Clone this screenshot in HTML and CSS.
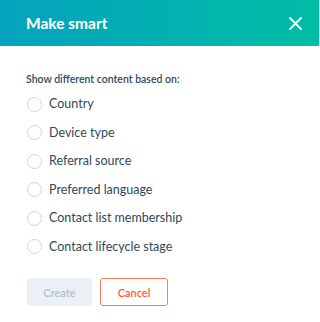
FILE: index.html
```html
<!DOCTYPE html>
<html>
<head>
<meta charset="utf-8">
<link rel="stylesheet" href="styles.css">
</head>
<body>
<div class="modal">
  <div class="header">
    <h1 class="title">Make smart</h1>
    <svg class="close" width="13" height="13" viewBox="0 0 13 13"><path d="M1 1 L12 12 M12 1 L1 12" stroke="#fff" stroke-width="1.8" stroke-linecap="round"/></svg>
  </div>
  <div class="content">
    <p class="label">Show different content based on:</p>
    <ul class="options">
      <li class="option"><span class="radio"></span><span class="opt-text">Country</span></li>
      <li class="option"><span class="radio"></span><span class="opt-text">Device type</span></li>
      <li class="option"><span class="radio"></span><span class="opt-text">Referral source</span></li>
      <li class="option"><span class="radio"></span><span class="opt-text">Preferred language</span></li>
      <li class="option"><span class="radio"></span><span class="opt-text">Contact list membership</span></li>
      <li class="option"><span class="radio"></span><span class="opt-text">Contact lifecycle stage</span></li>
    </ul>
    <div class="actions">
      <button class="btn btn-create">Create</button>
      <button class="btn btn-cancel">Cancel</button>
    </div>
  </div>
</div>
</body>
</html>
```
FILE: styles.css
```css
html, body {
  margin: 0;
  padding: 0;
  background: #fff;
  font-family: Lato, "Noto Sans", sans-serif;
  color: #33475b;
}
.modal {
  width: 319px;
  height: 322px;
}
.header {
  height: 46px;
  background: linear-gradient(90deg, #05a3bd 0%, #00bda5 100%);
  display: flex;
  align-items: center;
  justify-content: space-between;
  padding: 0 17px 0 26px;
  box-sizing: border-box;
}
.title {
  margin: 0;
  font-size: 15.5px;
  font-weight: 700;
  color: #fff;
  line-height: 20px;
}
.close {
  display: block;
}
.content {
  padding: 0 26px;
}
.label {
  margin: 25px 0 0;
  font-size: 10.5px;
  line-height: 16px;
  font-weight: 600;
}
.options {
  list-style: none;
  margin: 3px 0 0;
  padding: 0;
}
.option {
  height: 28.5px;
  display: flex;
  align-items: center;
}
.radio {
  width: 13px;
  height: 13px;
  border: 1px solid #cbd6e2;
  border-radius: 50%;
  margin-left: 1px;
  margin-right: 7px;
  flex: none;
}
.opt-text {
  font-size: 12.5px;
  line-height: 16px;
}
.actions {
  display: flex;
  gap: 8px;
  margin-top: 17px;
  margin-left: 1px;
}
.btn {
  height: 28px;
  border-radius: 3px;
  font-family: Lato, "Noto Sans", sans-serif;
  font-size: 11px;
  font-weight: 600;
  padding: 0;
  box-sizing: border-box;
}
.btn-create {
  width: 65px;
  background: #eaf0f6;
  border: 1px solid #eaf0f6;
  color: #b0c1d4;
}
.btn-cancel {
  width: 68px;
  background: #fff;
  border: 1px solid #ff7a59;
  color: #ff5c35;
}
```
